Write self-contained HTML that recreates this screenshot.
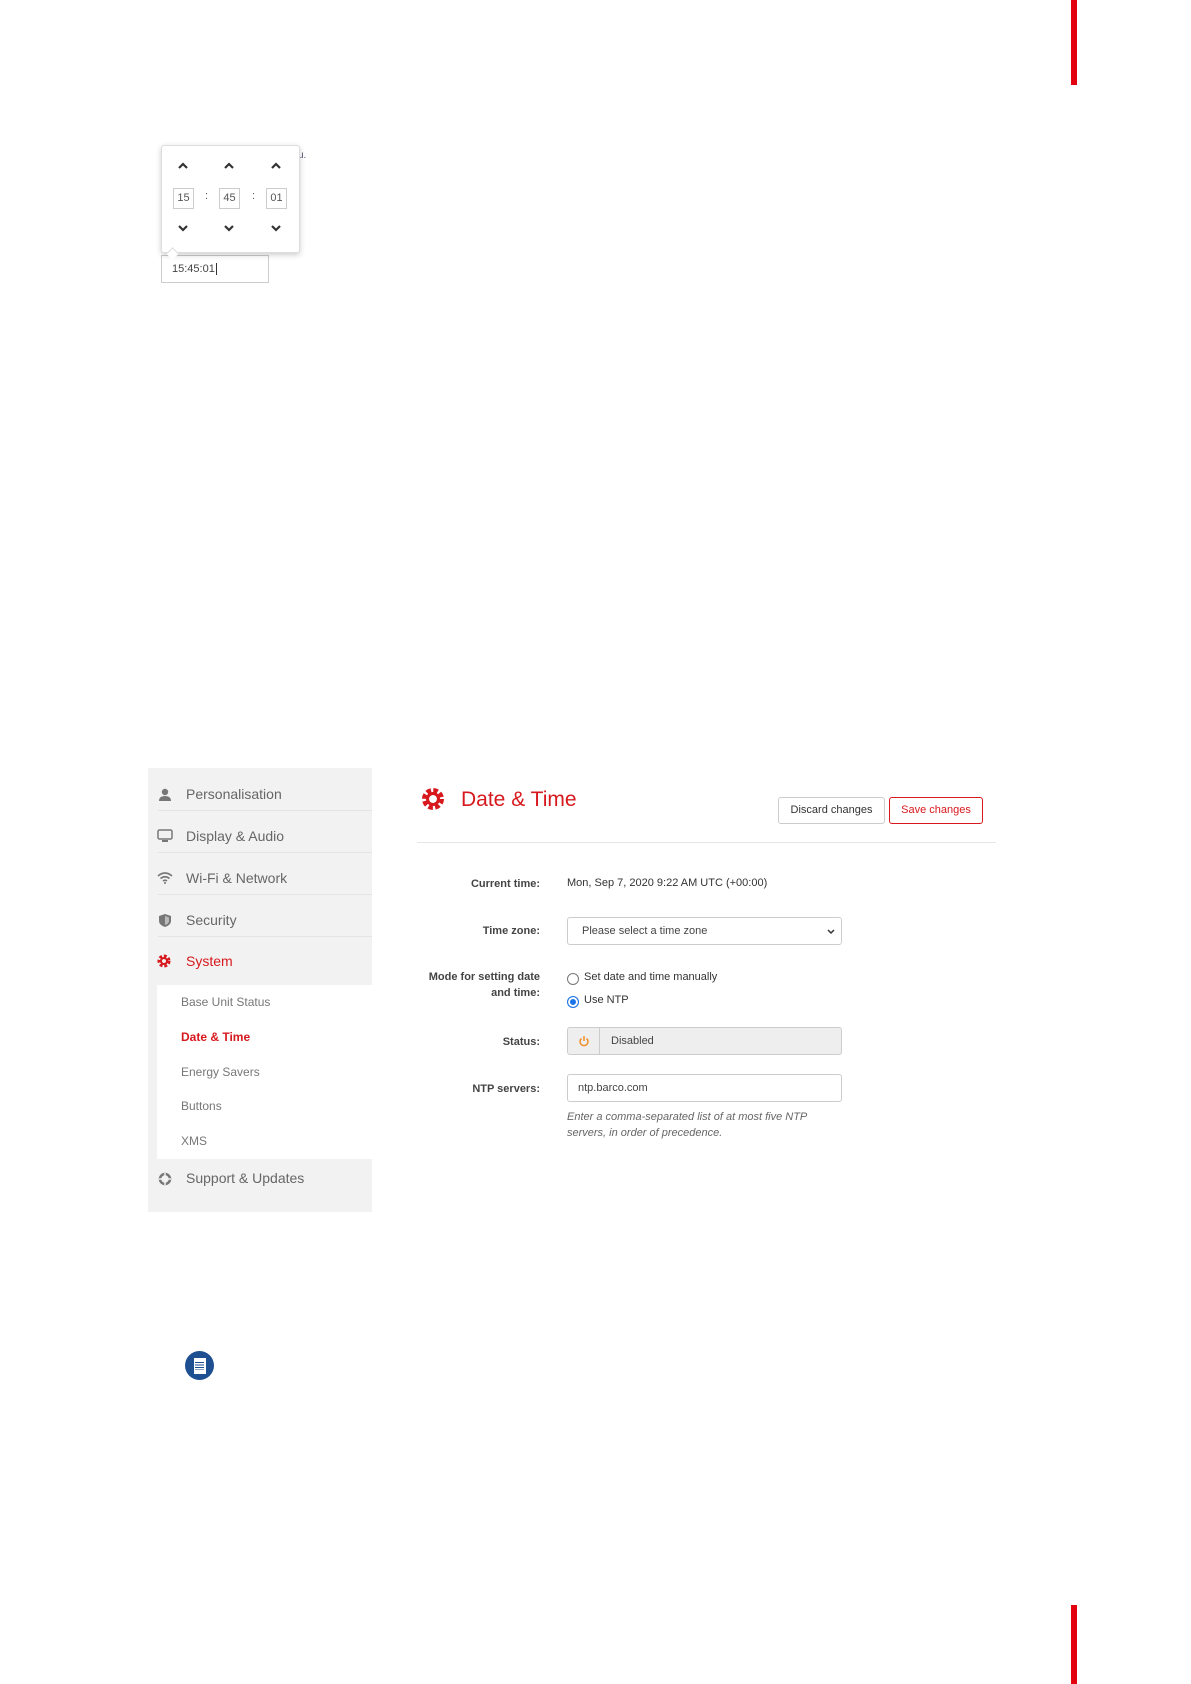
<!DOCTYPE html>
<html><head><meta charset="utf-8"><style>
body{margin:0;width:1191px;height:1684px;background:#fff;position:relative;font-family:"Liberation Sans",sans-serif;overflow:hidden}
.a{position:absolute}
.bar{position:absolute;left:1071px;width:6px;background:#e3000f}
.pop{left:161px;top:145px;width:137px;height:106px;border:1px solid #ddd;border-radius:3px;box-shadow:0 2px 6px rgba(0,0,0,.2);background:#fff}
.box{position:absolute;width:19px;height:19px;border:1px solid #ccc;font-size:11px;color:#555;line-height:19px;text-align:center}
.chev{position:absolute}
.side{left:148px;top:768px;width:224px;height:444px;background:#f2f2f2}
.it{position:absolute;left:38px;font-size:14px;color:#666}
.sep{position:absolute;left:10px;right:0;height:1px;background:#e4e4e4}
.sub{position:absolute;left:33px;font-size:12px;color:#777}
.lab{position:absolute;right:651px;font-size:11px;color:#444;font-weight:bold;text-align:right;line-height:16px}
.val{position:absolute;left:567px;font-size:11px;color:#333}
.inp{position:absolute;left:567px;width:275px;height:28px;border:1px solid #ccc;border-radius:3px;box-sizing:border-box;font-size:11px;color:#444;line-height:26px}
</style></head><body>
<div class="bar" style="top:0;height:85px"></div>
<div class="bar" style="top:1605px;height:79px"></div>

<div class="a" style="left:298px;top:150px;font-size:10px;color:#557">u.</div>
<div class="a" style="left:161px;top:255px;width:108px;height:28px;border:1px solid #ccc;box-sizing:border-box;font-size:11px;color:#444;line-height:26px;padding-left:10px">15:45:01<span style="border-left:1px solid #333;margin-left:1px"></span></div>
<div class="a pop">
 <svg class="chev" style="left:15px;top:16px" width="12" height="8"><path d="M2 6L6 2L10 6" fill="none" stroke="#333" stroke-width="2.2"/></svg>
 <svg class="chev" style="left:61px;top:16px" width="12" height="8"><path d="M2 6L6 2L10 6" fill="none" stroke="#333" stroke-width="2.2"/></svg>
 <svg class="chev" style="left:108px;top:16px" width="12" height="8"><path d="M2 6L6 2L10 6" fill="none" stroke="#333" stroke-width="2.2"/></svg>
 <div class="box" style="left:11px;top:42px">15</div><div class="a" style="left:43px;top:44px;font-size:11px;color:#555">:</div>
 <div class="box" style="left:57px;top:42px">45</div><div class="a" style="left:90px;top:44px;font-size:11px;color:#555">:</div>
 <div class="box" style="left:104px;top:42px">01</div>
 <svg class="chev" style="left:15px;top:78px" width="12" height="8"><path d="M2 2L6 6L10 2" fill="none" stroke="#333" stroke-width="2.2"/></svg>
 <svg class="chev" style="left:61px;top:78px" width="12" height="8"><path d="M2 2L6 6L10 2" fill="none" stroke="#333" stroke-width="2.2"/></svg>
 <svg class="chev" style="left:108px;top:78px" width="12" height="8"><path d="M2 2L6 6L10 2" fill="none" stroke="#333" stroke-width="2.2"/></svg>
</div>
<div class="a" style="left:168px;top:249px;width:8px;height:8px;background:#fff;border-left:1px solid #ddd;border-top:1px solid #ddd;transform:rotate(45deg)"></div>

<div class="a side">
 <div class="it" style="top:18px"><svg class="a" style="left:-28px;top:2px" width="14" height="14"><circle cx="7" cy="4" r="3.2" fill="#777"/><path d="M1 13Q1 8 7 8Q13 8 13 13Z" fill="#777"/></svg>Personalisation</div>
 <div class="sep" style="top:42px"></div>
 <div class="it" style="top:60px"><svg class="a" style="left:-29px;top:1px" width="16" height="14"><rect x="1" y="1" width="14" height="9" rx="1.5" fill="none" stroke="#777" stroke-width="1.5"/><rect x="5" y="11" width="6" height="2" fill="#777"/></svg>Display &amp; Audio</div>
 <div class="sep" style="top:84px"></div>
 <div class="it" style="top:102px"><svg class="a" style="left:-29px;top:2px" width="16" height="12"><path d="M1 4Q8 -2 15 4M3.5 6.5Q8 3 12.5 6.5M6 9Q8 7.5 10 9" fill="none" stroke="#777" stroke-width="1.6"/><circle cx="8" cy="11" r="1" fill="#777"/></svg>Wi-Fi &amp; Network</div>
 <div class="sep" style="top:126px"></div>
 <div class="it" style="top:144px"><svg class="a" style="left:-28px;top:1px" width="14" height="15"><path d="M7 1L13 3V8Q13 12 7 14Q1 12 1 8V3Z" fill="#777"/><path d="M7 3V12Q11 10.5 11 8V4.5Z" fill="#bbb"/></svg>Security</div>
 <div class="sep" style="top:168px"></div>
 <div class="it" style="top:185px;color:#d7191e"><svg class="a" style="left:-29px;top:1px" width="14" height="14"><circle cx="7" cy="7" r="4.3" fill="none" stroke="#d7191e" stroke-width="4.5" stroke-dasharray="2.4 1.6"/><circle cx="7" cy="7" r="3" fill="none" stroke="#d7191e" stroke-width="2"/></svg>System</div>
 <div class="a" style="left:9px;top:217px;width:215px;height:174px;background:#fff"></div>
 <div class="sub" style="top:227px">Base Unit Status</div>
 <div class="sub" style="top:262px;color:#d7191e;font-weight:bold">Date &amp; Time</div>
 <div class="sub" style="top:297px">Energy Savers</div>
 <div class="sub" style="top:331px">Buttons</div>
 <div class="sub" style="top:366px">XMS</div>
 <div class="it" style="top:402px"><svg class="a" style="left:-28px;top:2px" width="14" height="14"><circle cx="7" cy="7" r="5" fill="none" stroke="#777" stroke-width="2.5"/><path d="M7 1V13M1 7H13" stroke="#f2f2f2" stroke-width="1.5"/></svg>Support &amp; Updates</div>
</div>

<svg class="a" style="left:421px;top:787px" width="24" height="24"><circle cx="12" cy="12" r="7.5" fill="none" stroke="#d7191e" stroke-width="7" stroke-dasharray="3.9 2"/><circle cx="12" cy="12" r="5.5" fill="none" stroke="#d7191e" stroke-width="3"/></svg>
<div class="a" style="left:461px;top:788px;font-size:21px;color:#d7191e">Date &amp; Time</div>
<div class="a" style="left:778px;top:797px;width:107px;height:27px;border:1px solid #ccc;border-radius:3px;box-sizing:border-box;font-size:11px;color:#333;text-align:center;line-height:25px">Discard changes</div>
<div class="a" style="left:889px;top:797px;width:94px;height:27px;border:1px solid #d7191e;border-radius:3px;box-sizing:border-box;font-size:11px;color:#d7191e;text-align:center;line-height:25px">Save changes</div>
<div class="a" style="left:417px;top:842px;width:579px;height:1px;background:#e6e6e6"></div>

<div class="lab" style="top:876px">Current time:</div>
<div class="val" style="top:877px">Mon, Sep 7, 2020 9:22 AM UTC (+00:00)</div>
<div class="lab" style="top:923px">Time zone:</div>
<div class="inp" style="top:917px;padding-left:14px">Please select a time zone<svg class="a" style="right:6px;top:11px" width="8" height="6"><path d="M1 1L4 4L7 1" fill="none" stroke="#333" stroke-width="1.5"/></svg></div>
<div class="lab" style="top:969px">Mode for setting date<br>and time:</div>
<div class="a" style="left:567px;top:973px;width:10px;height:10px;border:1px solid #777;border-radius:50%"></div>
<div class="val" style="left:584px;top:971px">Set date and time manually</div>
<div class="a" style="left:567px;top:996px;width:10px;height:10px;border:1px solid #1a73e8;border-radius:50%;box-shadow:inset 0 0 0 2px #fff;background:#1a73e8"></div>
<div class="val" style="left:584px;top:994px">Use NTP</div>
<div class="lab" style="top:1034px">Status:</div>
<div class="inp" style="top:1027px;background:#eee"><span class="a" style="left:0;top:0;width:31px;height:26px;border-right:1px solid #ccc"><svg class="a" style="left:10px;top:7px" width="12" height="12"><path d="M3.5 3.5A4 4 0 1 0 8.5 3.5" fill="none" stroke="#f0902a" stroke-width="1.5"/><path d="M6 1V6" stroke="#f0902a" stroke-width="1.5"/></svg></span><span style="margin-left:43px">Disabled</span></div>
<div class="lab" style="top:1081px">NTP servers:</div>
<div class="inp" style="top:1074px;padding-left:10px">ntp.barco.com</div>
<div class="val" style="top:1109px;font-style:italic;color:#666;line-height:16px">Enter a comma-separated list of at most five NTP<br>servers, in order of precedence.</div>

<div class="a" style="left:185px;top:1351px;width:29px;height:29px;border-radius:50%;background:#1d4f91"></div>
<div class="a" style="left:193px;top:1357px;width:12px;height:16px;background:#fff;border:1px solid #1d4f91"></div>
<div class="a" style="left:195px;top:1362px;width:9px;height:8px;background:repeating-linear-gradient(#1d4f91 0 1px,transparent 1px 2.5px)"></div>
</body></html>
